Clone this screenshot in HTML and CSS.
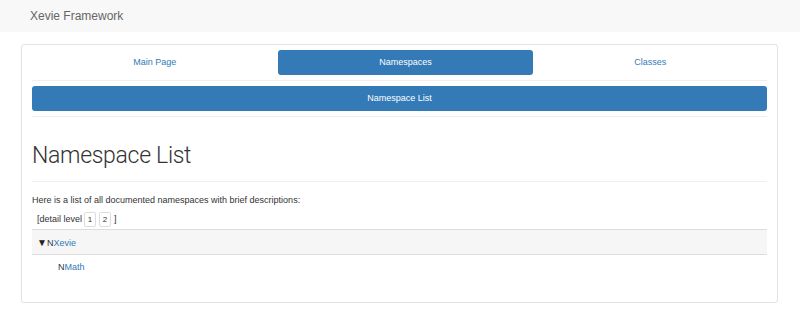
FILE: index.html
```html
<!DOCTYPE html>
<html lang="en">
<head>
  <meta charset="UTF-8">
  <title>Xevie Framework: Namespace List</title>
  <link rel="stylesheet" href="styles.css">
</head>
<body>
  <!-- Top navbar -->
  <div class="navbar">
    <span class="brand">Xevie Framework</span>
  </div>

  <div class="card">
    <ul class="tabs">
      <li><a href="#">Main Page</a></li>
      <li class="active"><a href="#">Namespaces</a></li>
      <li><a href="#">Classes</a></li>
    </ul>
    <ul class="subtabs">
      <li class="active"><a href="#">Namespace List</a></li>
    </ul>

    <div class="header">
      <h1>Namespace List</h1>
    </div>

    <div class="contents">
      <p class="intro">Here is a list of all documented namespaces with brief descriptions:</p>
      <div class="levels">[detail level <span class="lvl">1</span><span class="lvl">2</span>]</div>
      <table class="directory">
        <tr class="even">
          <td class="entry"><span class="arrow">&#9660;</span><span class="icon">N</span><a href="#">Xevie</a></td>
        </tr>
        <tr>
          <td class="entry child"><span class="icon">N</span><a href="#">Math</a></td>
        </tr>
      </table>
    </div>
  </div>
</body>
</html>
```
FILE: styles.css
```css
body {
  margin: 0;
  font-family: "Liberation Sans", Arial, sans-serif;
  font-size: 9px;
  color: #333;
  background: #fff;
}
a {
  color: #337ab7;
  text-decoration: none;
}
.navbar {
  height: 32px;
  background: #f8f8f8;
  display: flex;
  align-items: center;
  padding-left: 30px;
}
.brand {
  font-size: 12px;
  color: #666;
}
.card {
  width: 735px;
  margin: 12px 0 0 21px;
  padding: 5px 10px 23px;
  border: 1px solid #e3e3e3;
  border-radius: 3px;
  box-shadow: 0 1px 1px rgba(0, 0, 0, 0.05);
}
.tabs, .subtabs {
  list-style: none;
  margin: 0;
  padding: 0;
}
.tabs {
  display: grid;
  grid-template-columns: 246fr 256fr 234fr;
  padding-bottom: 5px;
  border-bottom: 1px solid #eee;
}
.tabs li a, .subtabs li a {
  display: block;
  height: 25px;
  line-height: 25px;
  text-align: center;
  border-radius: 3px;
}
.tabs li.active a, .subtabs li.active a {
  background: #337ab7;
  color: #fff;
}
.subtabs {
  margin-top: 5px;
  padding-bottom: 5px;
  border-bottom: 1px solid #eee;
}
.header {
  margin-top: 25px;
  padding-bottom: 12px;
  border-bottom: 1px solid #eee;
}
h1 {
  margin: 0;
  font-family: Roboto, "Liberation Sans", sans-serif;
  font-weight: 300;
  font-size: 23px;
  letter-spacing: -0.3px;
  line-height: 27px;
  color: #333;
}
.contents {
  padding-top: 12px;
}
.intro {
  margin: 0;
  line-height: 13px;
}
.levels {
  margin: 5px 0 0 5px;
  height: 15px;
  line-height: 15px;
  display: flex;
  align-items: center;
}
.lvl {
  display: inline-block;
  width: 10px;
  height: 13px;
  line-height: 13px;
  text-align: center;
  border: 1px solid #ddd;
  border-radius: 2px;
  font-size: 8px;
  margin-left: 2px;
}
.lvl + .lvl {
  margin-left: 3px;
}
.levels .lvl:last-child {
  margin-right: 3px;
}
.directory {
  width: 100%;
  margin-top: 2px;
  border-collapse: collapse;
}
.directory tr.even td {
  background: #f6f6f6;
  border-top: 1px solid #ddd;
  border-bottom: 1px solid #ddd;
}
.entry {
  height: 24px;
  padding: 0 0 0 5px;
}
.entry.child {
  padding-left: 26px;
}
.arrow {
  font-size: 10px;
  color: #222;
}
.icon {
  color: #333;
}
```
